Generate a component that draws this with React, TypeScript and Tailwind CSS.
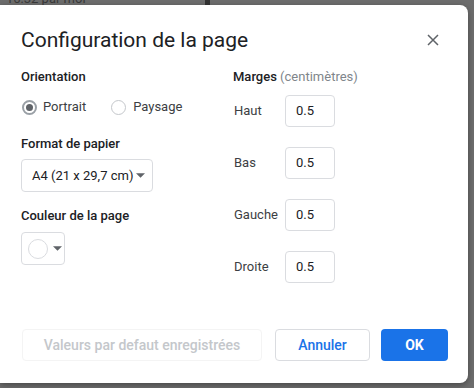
import React from "react";

const Caret = () => (
  <svg width="9" height="5" viewBox="0 0 10 5" className="shrink-0">
    <path d="M0 0 L10 0 L5 5 Z" fill="#5f6368" />
  </svg>
);

function MarginRow({ label }: { label: string }) {
  return (
    <div className="flex items-center h-[32px]">
      <div className="w-[51px] text-[13px] text-[#3c4043]">{label}</div>
      <div className="w-[50px] h-[32px] border border-[#dadce0] rounded-[4px] flex items-center pl-[10px] text-[13px] text-[#202124]">
        0.5
      </div>
    </div>
  );
}

export default function App() {
  return (
    <div
      className="relative w-[474px] h-[388px] overflow-hidden bg-[#6d6d6d]"
      style={{ fontFamily: "Roboto, 'Liberation Sans', sans-serif" }}
    >
      <div className="absolute left-[6px] top-[-8px] leading-[14px] text-[13px] text-[#3a3a3a] whitespace-nowrap">16:32 par moi</div>
      <div className="absolute left-[205px] top-0 w-[5px] h-[6px] bg-[#333]" />
      <div className="absolute left-0 top-[5px] w-[468px] h-[378px] bg-white rounded-tr-[8px] rounded-br-[8px] shadow-[0_2px_6px_rgba(0,0,0,0.35)] flex flex-col">
        <div className="flex items-center justify-between pl-[21px] pr-[29px] pt-[21px] h-[49px]">
          <div className="text-[21px] leading-[28px] text-[#202124]">
            Configuration de la page
          </div>
          <svg width="12" height="12" viewBox="0 0 12 12">
            <path d="M1 1 L11 11 M11 1 L1 11" stroke="#5f6368" strokeWidth="1.5" />
          </svg>
        </div>
        <div className="flex pl-[21px] pt-[13px]">
          <div className="w-[212px] flex flex-col">
            <div className="text-[13px] leading-[20px] font-medium text-[#202124]">Orientation</div>
            <div className="flex items-center h-[20px] mt-[10px] text-[13px] text-[#3c4043]">
              <div className="w-[15px] h-[15px] rounded-full border-2 border-[#9aa0a6] flex items-center justify-center ml-[1px]">
                <div className="w-[7px] h-[7px] rounded-full bg-[#5f6368]" />
              </div>
              <span className="ml-[6px]">Portrait</span>
              <div className="w-[15px] h-[15px] rounded-full border-[1.5px] border-[#c4c7cb] ml-[25px]" />
              <span className="ml-[7px]">Paysage</span>
            </div>
            <div className="text-[13px] leading-[20px] font-medium text-[#202124] mt-[17px]">Format de papier</div>
            <div className="mt-[5px] w-[132px] h-[33px] border border-[#dadce0] rounded-[4px] flex items-center justify-between pl-[10px] pr-[7px] text-[13px] text-[#202124] whitespace-nowrap">
              <span>A4 (21 x 29,7 cm)</span>
              <Caret />
            </div>
            <div className="text-[13px] leading-[20px] font-medium text-[#202124] mt-[14px]">Couleur de la page</div>
            <div className="mt-[6px] w-[44px] h-[33px] border border-[#dadce0] rounded-[4px] flex items-center pl-[6px] gap-[5px]">
              <div className="w-[20px] h-[20px] rounded-full border border-[#dadce0] bg-white" />
              <Caret />
            </div>
          </div>
          <div className="flex flex-col">
            <div className="text-[13px] leading-[20px] text-[#202124] whitespace-nowrap">
              <span className="font-medium">Marges</span>{" "}
              <span className="text-[#80868b]">(centimètres)</span>
            </div>
            <div className="flex flex-col gap-[20px] mt-[8px] pl-[1px]">
              <MarginRow label="Haut" />
              <MarginRow label="Bas" />
              <MarginRow label="Gauche" />
              <MarginRow label="Droite" />
            </div>
          </div>
        </div>
        <div className="mt-auto mb-[22px] flex items-center pl-[22px] pr-[20px] text-[14px] font-medium whitespace-nowrap">
          <div className="w-[240px] h-[32px] rounded-[4px] border border-[#f4f4f4] flex items-center justify-center text-[#c4c7cb]">
            Valeurs par defaut enregistrées
          </div>
          <div className="ml-[13px] w-[95px] h-[32px] rounded-[4px] border border-[#dadce0] flex items-center justify-center text-[#1a73e8]">
            Annuler
          </div>
          <div className="ml-[11px] w-[67px] h-[32px] rounded-[4px] bg-[#1a73e8] flex items-center justify-center text-white font-bold">
            OK
          </div>
        </div>
      </div>
    </div>
  );
}
